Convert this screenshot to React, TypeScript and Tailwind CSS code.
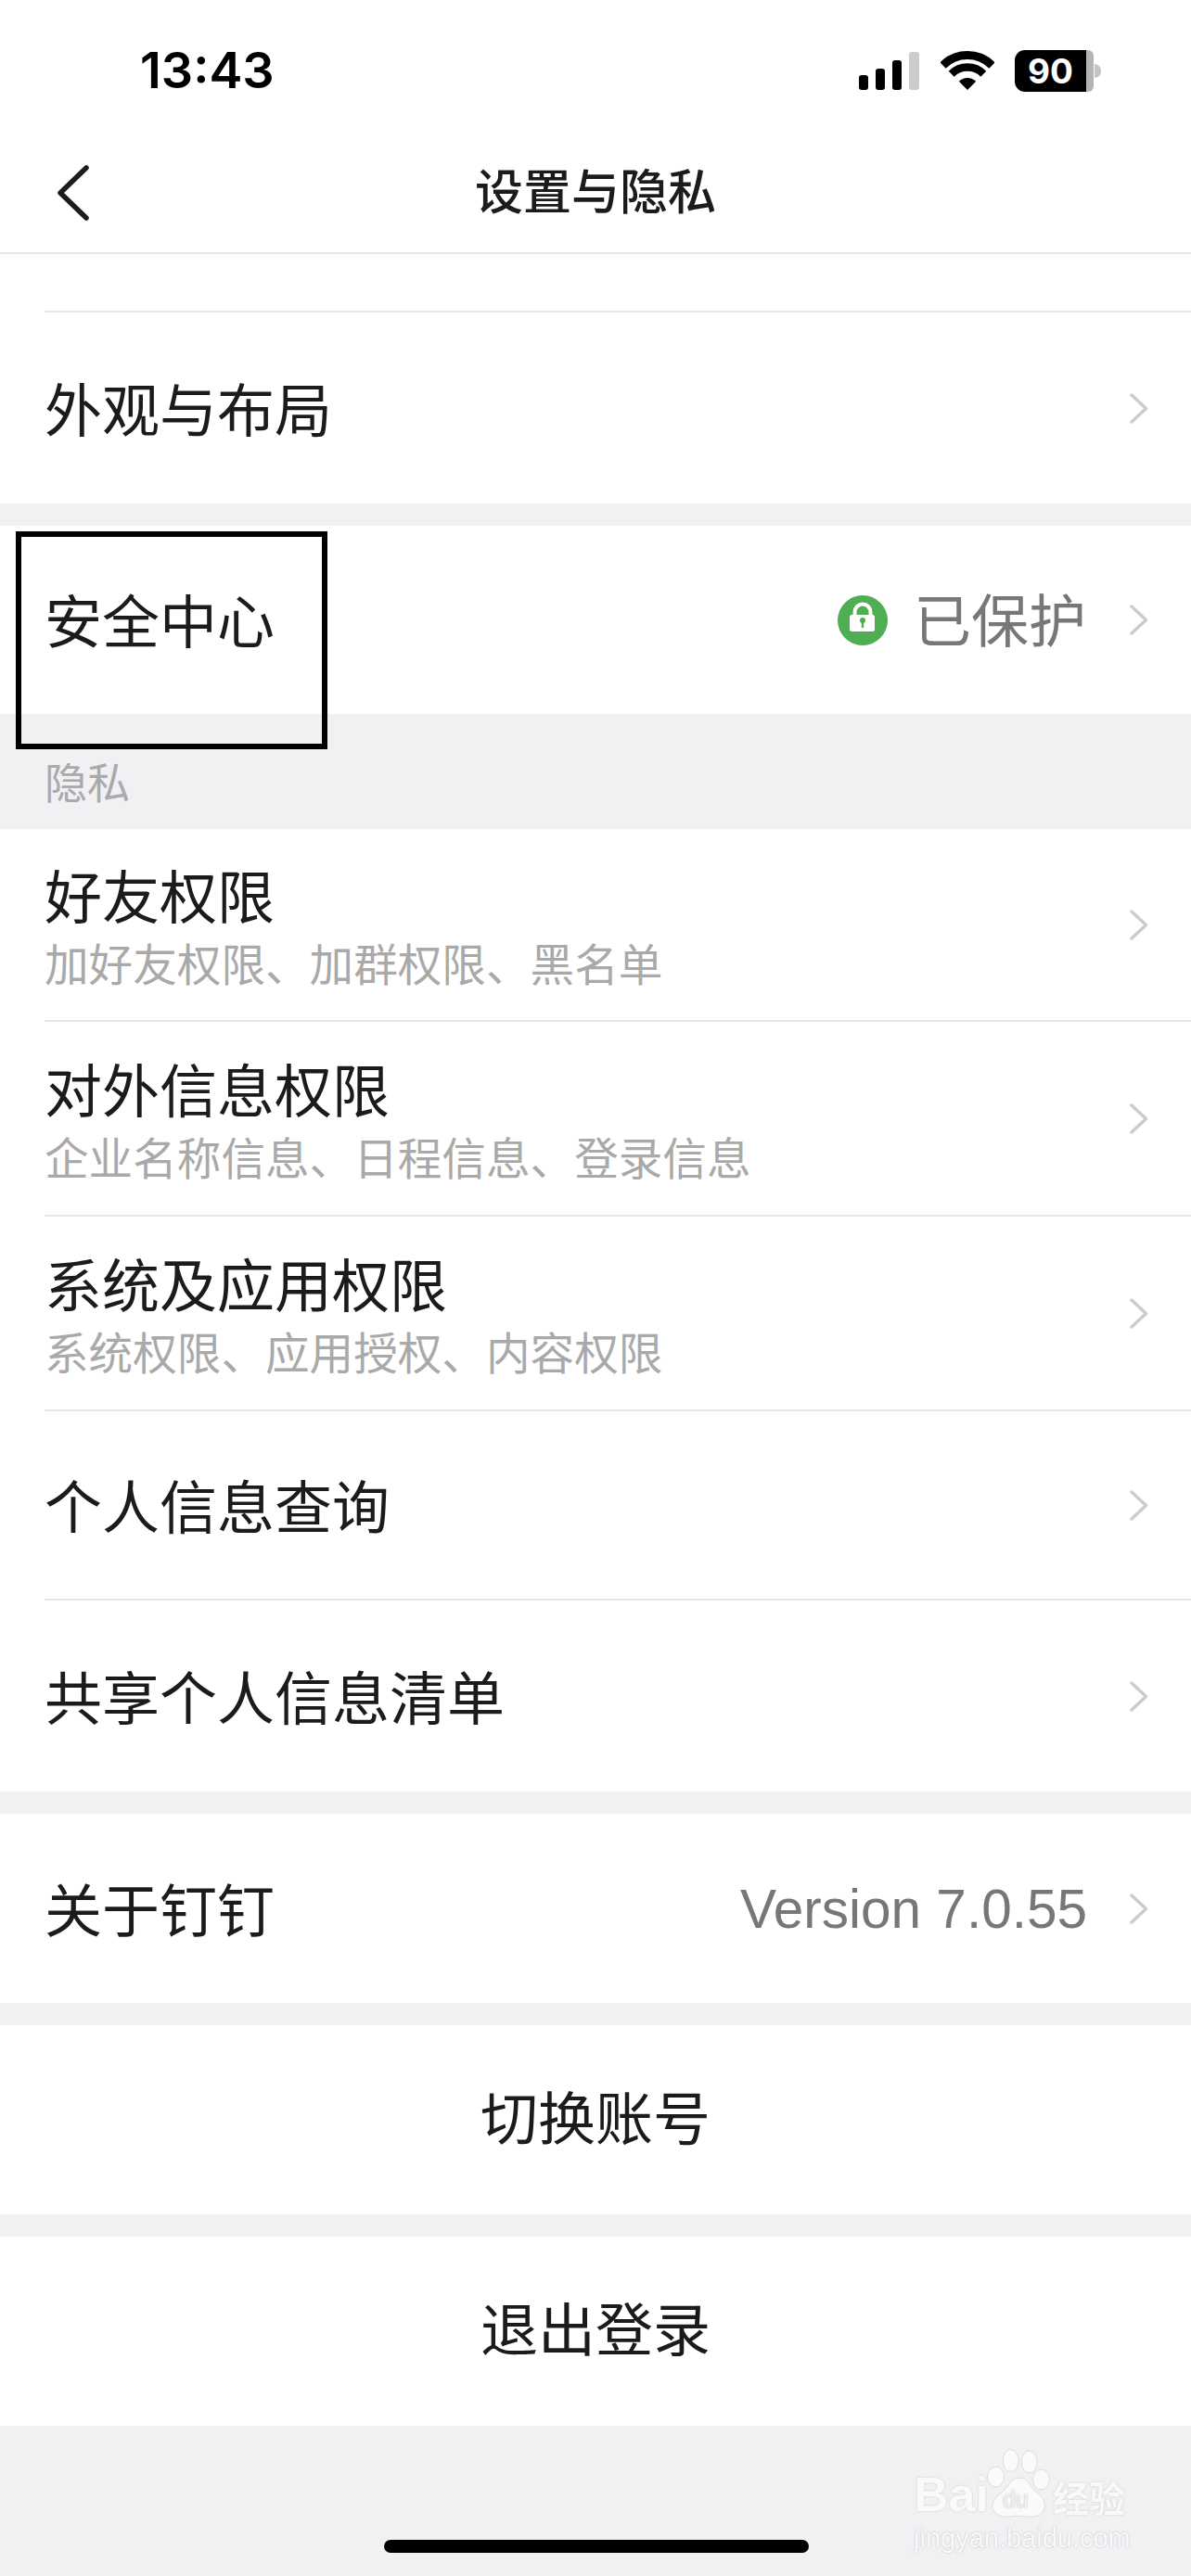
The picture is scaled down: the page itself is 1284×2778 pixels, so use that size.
const cjk = "font-['Noto_Sans_CJK_SC','Noto_Sans',sans-serif]"

function Chevron() {
  return (
    <svg width="20" height="33" viewBox="0 0 20 33" fill="none" className="shrink-0">
      <path d="M2 2 L17.5 16.5 L2 31" stroke="#cccccc" strokeWidth="3.5" strokeLinecap="round" strokeLinejoin="round" />
    </svg>
  )
}

function LockBadge() {
  return (
    <svg width="54" height="54" viewBox="0 0 54 54" className="shrink-0">
      <circle cx="27" cy="27" r="27" fill="#4fae53" />
      <path d="M18.5 22 V18 a8.5 8.5 0 0 1 17 0 V22" fill="none" stroke="#fff" strokeWidth="4" />
      <rect x="13" y="21" width="27" height="18" rx="2.5" fill="#fff" />
      <circle cx="27" cy="27" r="3" fill="#4fae53" />
      <rect x="25.8" y="27" width="2.4" height="8" fill="#4fae53" />
    </svg>
  )
}

function StatusBar() {
  return (
    <div className="flex h-[141px] items-center pt-[11px] pr-[97px] pl-[151px]">
      <span className="flex-1 font-['Inter',sans-serif] text-[54px] leading-none font-semibold text-black">13:43</span>
      <svg width="65" height="41" viewBox="0 0 65 41" className="mr-[23px] shrink-0">
        <rect x="0" y="25" width="10" height="16" rx="3" fill="#000" />
        <rect x="18" y="18" width="10" height="23" rx="3" fill="#000" />
        <rect x="36" y="9" width="10" height="32" rx="3" fill="#000" />
        <rect x="54" y="0" width="11" height="41" rx="3" fill="#cccccc" />
      </svg>
      <svg width="58" height="42" viewBox="0 0 58 42" className="mr-[22px] shrink-0">
        <path d="M2.5 15.5 A37.5 37.5 0 0 1 55.5 15.5" fill="none" stroke="#000" strokeWidth="9" />
        <path d="M11.7 24.7 A24.5 24.5 0 0 1 46.3 24.7" fill="none" stroke="#000" strokeWidth="8.5" />
        <path d="M29 42 L19.8 32.8 A13 13 0 0 1 38.2 32.8 Z" fill="#000" />
      </svg>
      <div className="flex shrink-0 items-center">
        <div className="flex h-[45px] w-[77px] items-center justify-center rounded-l-[11px] bg-black font-['Inter',sans-serif] text-[37px] leading-none font-bold text-white">
          90
        </div>
        <div className="h-[45px] w-[8px] rounded-r-[6px] bg-[#b4b4b4]" />
        <div className="ml-[1px] h-[15px] w-[7px] rounded-r-full bg-[#c4c4c4]" />
      </div>
    </div>
  )
}

function Header() {
  return (
    <div className="border-b-2 border-[#e6e6e6] bg-white">
      <StatusBar />
      <div className="relative flex h-[131px] items-center justify-center pb-[5px]">
        <svg width="36" height="60" viewBox="0 0 36 60" fill="none" className="absolute top-[37px] left-[60px]">
          <path d="M33 3 L5 30 L33 57" stroke="#1d1d1f" strokeWidth="5.5" strokeLinecap="round" strokeLinejoin="round" />
        </svg>
        <span className={`${cjk} text-[52px] leading-none font-medium text-[#1b1b1d]`}>设置与隐私</span>
      </div>
    </div>
  )
}

type RowProps = {
  title: string
  subtitle?: string
  height: string
  divider?: boolean
  right?: React.ReactNode
}

function Row({ title, subtitle, height, divider, right }: RowProps) {
  return (
    <div className="bg-white pl-[48px]">
      <div className={`flex items-center pr-[46px] ${height} ${divider ? 'border-b-2 border-[#e6e6e6]' : ''}`}>
        <div className={`flex-1 ${subtitle ? '' : 'pb-[3px]'}`}>
          <div className={`${cjk} text-[62px] leading-[72px] text-[#1b1b1d]`}>{title}</div>
          {subtitle && <div className={`${cjk} mt-[9px] text-[47.6px] leading-[58px] text-[#a9a9a9]`}>{subtitle}</div>}
        </div>
        {right}
        <Chevron />
      </div>
    </div>
  )
}

function ActionRow({ label, height }: { label: string; height: string }) {
  return (
    <div className={`flex items-center justify-center bg-white pb-[10px] ${height} ${cjk} text-[62px] text-[#1b1b1d]`}>
      {label}
    </div>
  )
}

function Watermark() {
  return (
    <div className="absolute top-[2641px] left-[985px] w-[240px]">
      <div className="flex items-end">
        <span className="font-['Liberation_Sans',sans-serif] text-[52px] leading-[50px] font-bold text-[#f9f9fa] [text-shadow:0_0_2px_#c4c4c4]">
          Bai
        </span>
        <div className="relative -ml-[2px] h-[74px] w-[70px]">
          <svg width="70" height="74" viewBox="0 0 70 74">
            <g fill="#fafafa" stroke="#dcdcdc" strokeWidth="1">
              <ellipse cx="25.7" cy="12.5" rx="8.5" ry="12" />
              <ellipse cx="45.7" cy="14" rx="8.5" ry="12" />
              <ellipse cx="9.5" cy="30" rx="9" ry="11" />
              <ellipse cx="58.5" cy="33" rx="9" ry="11" />
              <path d="M35 31 C44 31 47 41 53 46 C60 52 64 57 62 64 C60 72 52 74 44 73 C38 72 32 72 25 73 C16 74 7 71 6 63 C5 55 11 51 17 46 C23 41 26 31 35 31 Z" />
            </g>
          </svg>
          <span className="absolute top-[42px] left-[17px] font-['Liberation_Sans',sans-serif] text-[25px] leading-[25px] text-[#f0f0f0] [text-shadow:0_0_2px_#b0b0b0]">
            du
          </span>
        </div>
        <span className={`${cjk} -mb-[2px] ml-[1px] text-[39px] leading-[50px] font-bold text-[#f9f9fa] [text-shadow:0_0_2px_#c4c4c4]`}>
          经验
        </span>
      </div>
      <div className="mt-[5px] font-['Liberation_Sans',sans-serif] text-[29px] leading-[34px] text-[#f9f9fa] [text-shadow:0_0_2px_#b8b8b8]">
        jingyan.baidu.com
      </div>
    </div>
  )
}

export default function App() {
  return (
    <div className="relative h-[2778px] w-[1284px] overflow-hidden bg-[#f1f1f3]">
      <Header />

      <div className="bg-white pl-[48px]">
        <div className="h-[63px] border-b-2 border-[#e6e6e6]" />
      </div>
      <Row title="外观与布局" height="h-[206px]" />

      <div className="mt-[24px]">
        <Row
          title="安全中心"
          height="h-[203px]"
          right={
            <div className="mr-[47px] flex items-center gap-[28px]">
              <LockBadge />
              <span className={`${cjk} pb-[5px] text-[62px] leading-[72px] text-[#777777]`}>已保护</span>
            </div>
          }
        />
      </div>

      <div className={`flex h-[124px] items-center pt-[19px] pl-[48px] ${cjk} text-[46px] text-[#aaaaac]`}>隐私</div>

      <Row title="好友权限" subtitle="加好友权限、加群权限、黑名单" height="h-[208px]" divider />
      <Row title="对外信息权限" subtitle="企业名称信息、日程信息、登录信息" height="h-[210px]" divider />
      <Row title="系统及应用权限" subtitle="系统权限、应用授权、内容权限" height="h-[210px]" divider />
      <Row title="个人信息查询" height="h-[204px]" divider />
      <Row title="共享个人信息清单" height="h-[206px]" />

      <div className="mt-[24px]">
        <Row
          title="关于钉钉"
          height="h-[204px]"
          right={
            <span className="mt-[2px] mr-[46px] font-['Liberation_Sans',sans-serif] text-[58.5px] leading-[72px] text-[#777777]">
              Version 7.0.55
            </span>
          }
        />
      </div>

      <div className="mt-[24px]">
        <ActionRow label="切换账号" height="h-[204px]" />
      </div>
      <div className="mt-[24px]">
        <ActionRow label="退出登录" height="h-[204px]" />
      </div>

      <div className="absolute top-[2739px] left-[414px] h-[14px] w-[458px] rounded-full bg-black" />
      <Watermark />

      {/* annotation box drawn over the screenshot */}
      <div className="absolute top-[573px] left-[17px] h-[235px] w-[336px] border-[6px] border-black" />
    </div>
  )
}
